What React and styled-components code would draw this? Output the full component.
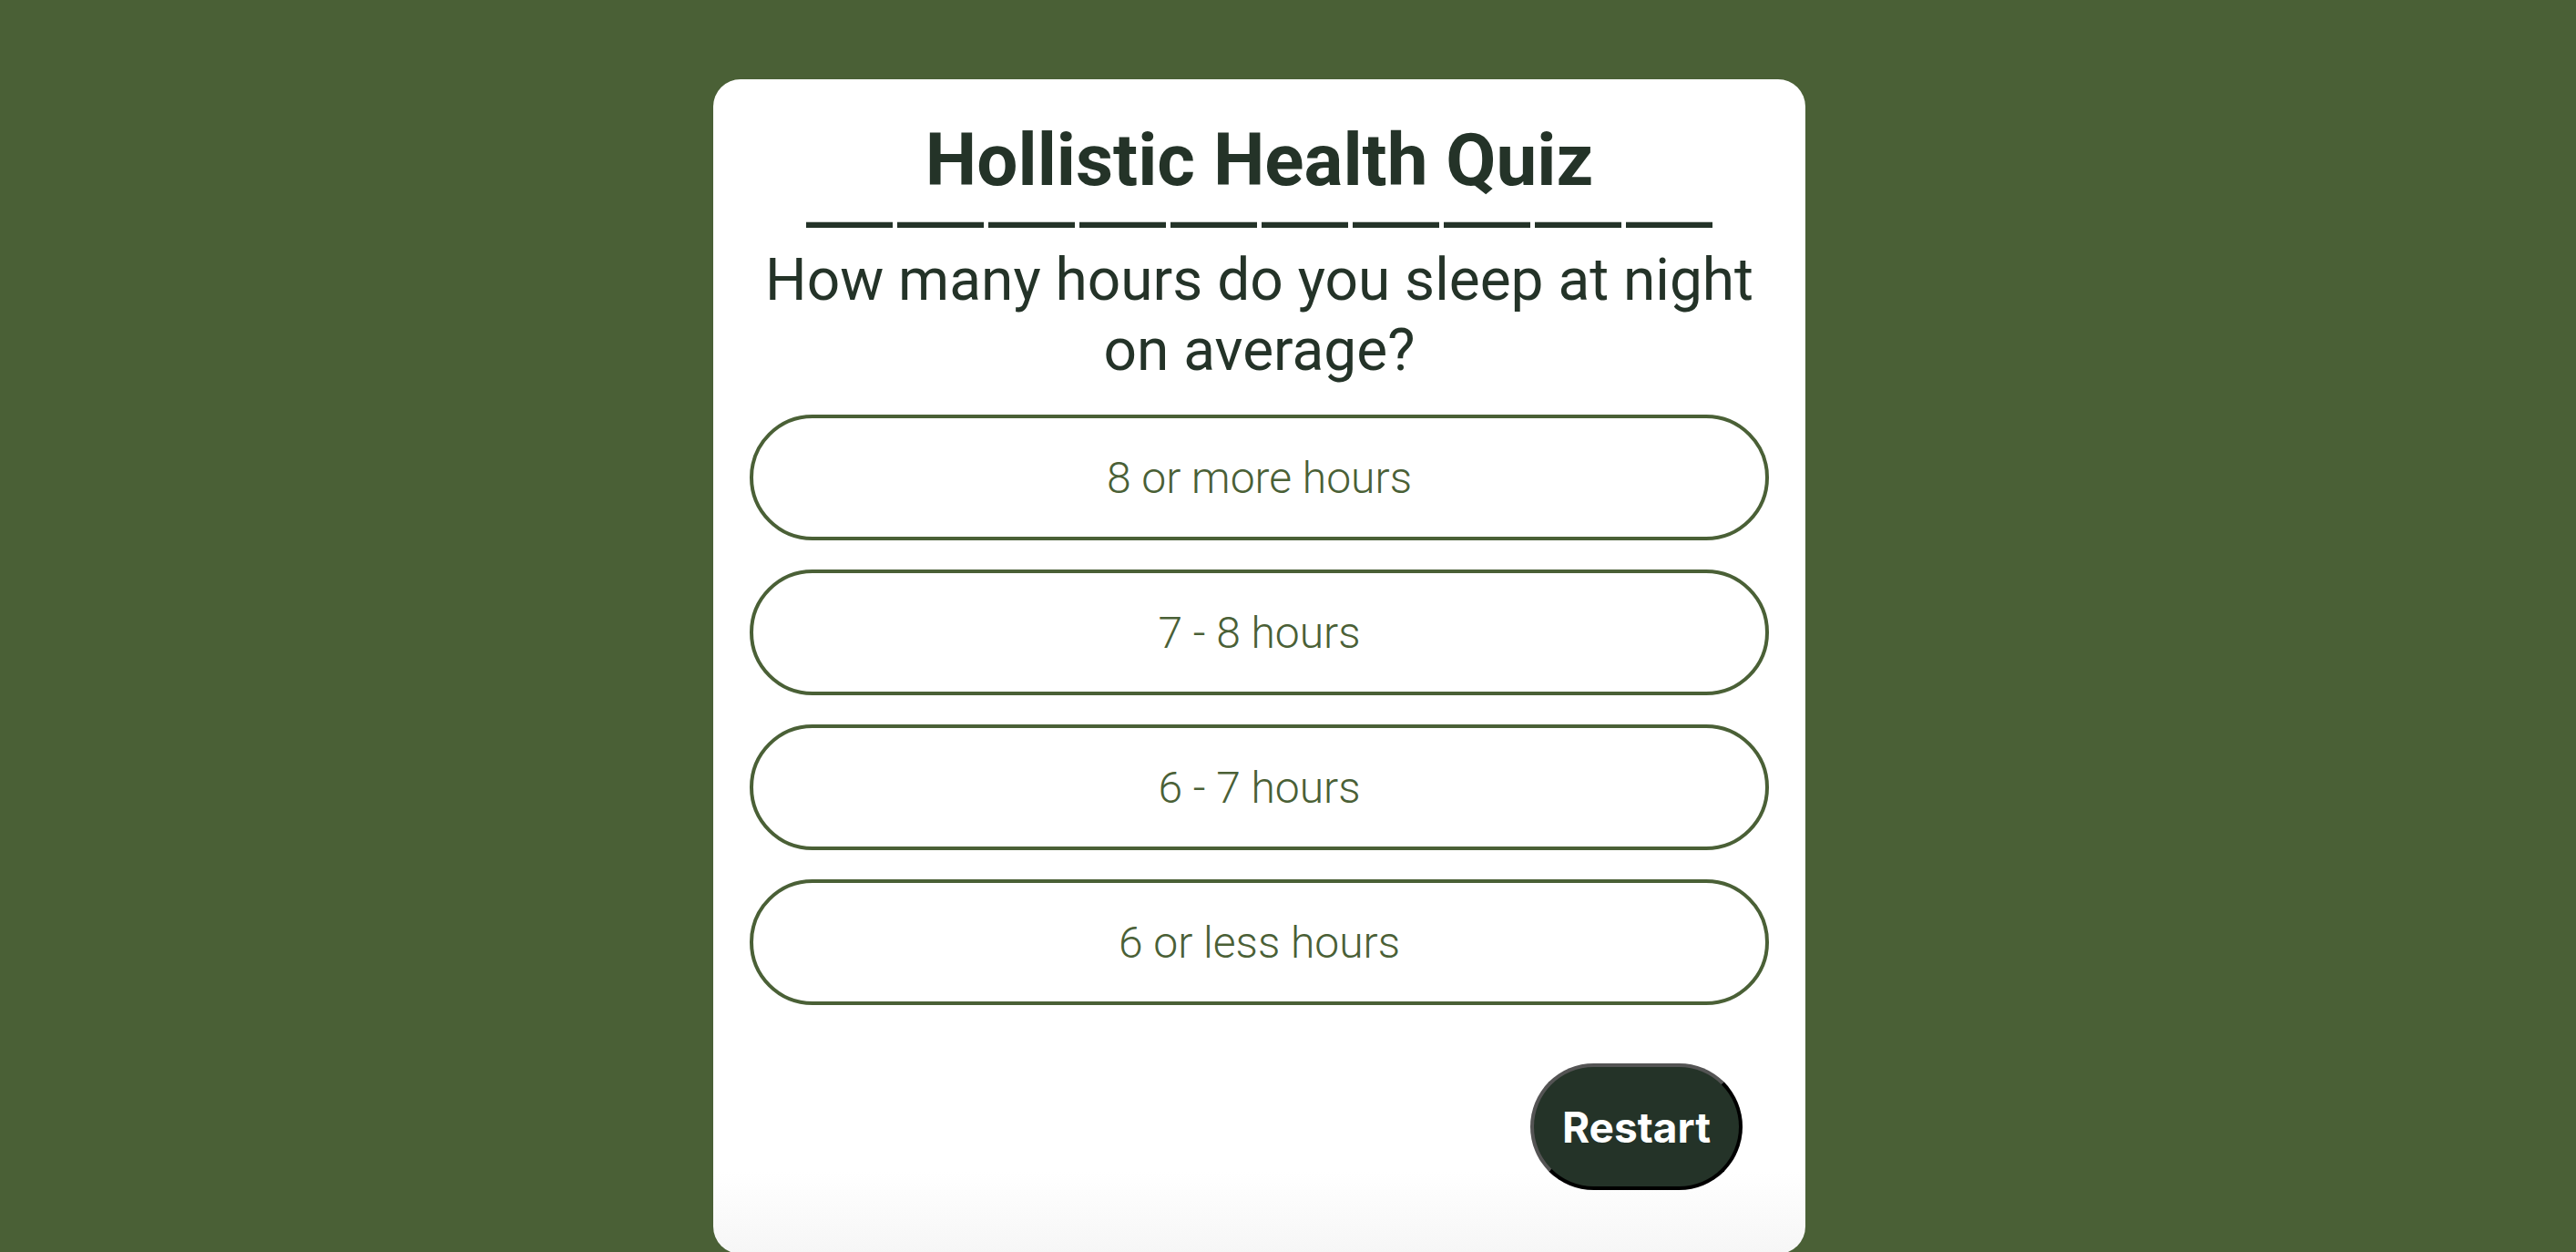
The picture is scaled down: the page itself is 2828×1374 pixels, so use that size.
import React from "react";
import styled, { createGlobalStyle } from "styled-components";

const GlobalStyle = createGlobalStyle`
  html, body {
    margin: 0;
    padding: 0;
    background: #4a6036;
  }
  body {
    font-family: Roboto, "Liberation Sans", sans-serif;
  }
`;

const options = ["8 or more hours", "7 - 8 hours", "6 - 7 hours", "6 or less hours"];

export default function App() {
  return (
    <>
      <GlobalStyle />
      <Page>
        <Card>
          <Title>Hollistic Health Quiz</Title>
          <Divider>——————————</Divider>
          <Question>How many hours do you sleep at night on average?</Question>
          <OptionList>
            {options.map((option) => (
              <Option key={option}>{option}</Option>
            ))}
          </OptionList>
          <Footer>
            <RestartButton>Restart</RestartButton>
          </Footer>
        </Card>
      </Page>
    </>
  );
}

const Page = styled.div`
  min-height: 100vh;
  box-sizing: border-box;
  display: flex;
  justify-content: center;
  align-items: flex-start;
  padding: 87px 63px 0 0;
`;

const Card = styled.div`
  width: 1199px;
  box-sizing: border-box;
  background: linear-gradient(to bottom, #ffffff 93%, #f6f6f6 100%);
  border-radius: 30px;
  padding: 42px 40px 70px;
  text-align: center;
  color: #243328;
`;

const Title = styled.h1`
  margin: 0;
  font-size: 80px;
  font-weight: 700;
  line-height: 94px;
`;

const Divider = styled.div`
  height: 46px;
  margin-top: -8px;
  margin-bottom: 8px;
  padding-left: 5px;
  font-family: "Liberation Sans", Arial, sans-serif;
  font-size: 95px;
  font-weight: 400;
  letter-spacing: 5px;
  line-height: 46px;
  white-space: nowrap;
`;

const Question = styled.h2`
  margin: 0 auto;
  max-width: 1100px;
  font-size: 64px;
  font-weight: 400;
  line-height: 77px;
`;

const OptionList = styled.div`
  display: flex;
  flex-direction: column;
  gap: 32px;
  margin-top: 32px;
`;

const Option = styled.button`
  height: 138px;
  width: 100%;
  background: #ffffff;
  border: 4px solid #4a6036;
  border-radius: 70px;
  font-family: Roboto, "Liberation Sans", sans-serif;
  font-size: 48px;
  font-weight: 300;
  color: #4a6036;
  cursor: pointer;
`;

const Footer = styled.div`
  display: flex;
  justify-content: flex-end;
  margin-top: 64px;
  padding-right: 29px;
`;

const RestartButton = styled.button`
  width: 233px;
  height: 139px;
  background: #243328;
  color: #ffffff;
  border: 4px outset #000000;
  border-radius: 70px;
  font-family: Inter, "Liberation Sans", sans-serif;
  font-size: 46px;
  font-weight: 700;
  cursor: pointer;
`;
